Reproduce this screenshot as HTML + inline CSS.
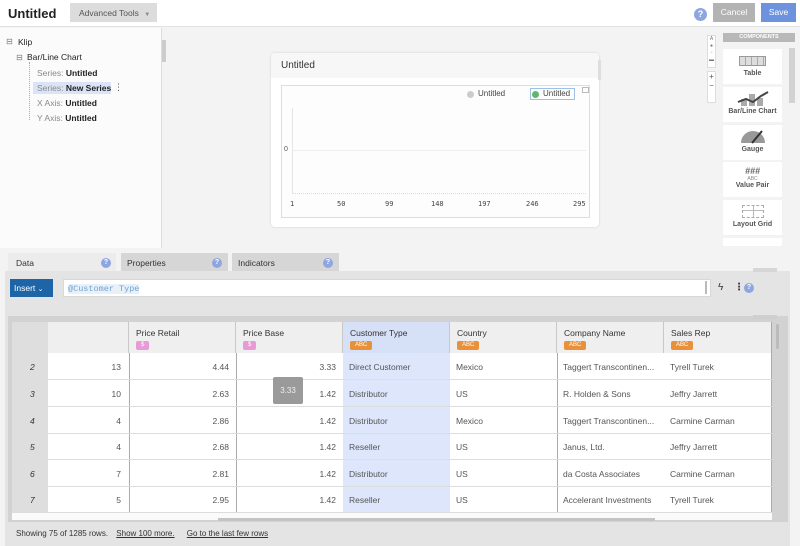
<!DOCTYPE html>
<html><head><meta charset="utf-8"><style>
*{box-sizing:border-box;margin:0;padding:0}
body{width:800px;height:546px;overflow:hidden;background:#f3f3f3;font-family:"Liberation Sans","DejaVu Sans",sans-serif;font-size:9px;color:#333;position:relative}
.a{position:absolute;white-space:nowrap}
.q{position:absolute;width:10px;height:10px;border-radius:50%;background:#8ea6e0;color:#fff;font-size:7px;font-weight:bold;text-align:center;line-height:10px}
.comp{position:absolute;left:723px;width:59px;height:35px;background:#fff;text-align:center;font-size:7px;font-weight:bold;color:#555;white-space:nowrap}
.th{position:absolute;top:322px;height:31px;border-right:1px solid #c8c8c8;background:#efefef;padding:6px 7px;font-size:8.5px;color:#333;white-space:nowrap}
.tag{display:inline-block;margin-top:2px;padding:0 5px;height:9px;border-radius:2px;font-size:6px;line-height:9px;color:#fff}
.row{position:absolute;left:12px;width:760px;height:27px;border-bottom:1px solid #ddd;font-size:8.5px;color:#555}
.row span{position:absolute;top:9px;white-space:nowrap}
</style></head><body>
<div class="a" style="left:0;top:0;width:800px;height:27px;background:#fff;border-bottom:1px solid #e2e2e2"></div>
<div class="a" style="left:8px;top:6px;font-size:13px;font-weight:bold;color:#222">Untitled</div>
<div class="a" style="left:70px;top:3px;width:87px;height:19px;background:#dcdcdc;color:#555;font-size:8.5px;padding:5px 9px">Advanced Tools <span style="color:#888;font-size:6px;margin-left:3px">▼</span></div>
<div class="q" style="left:694px;top:8px;width:13px;height:13px;line-height:13px;font-size:9px">?</div>
<div class="a" style="left:713px;top:3px;width:42px;height:19px;background:#b3b3b3;color:#fff;font-size:8.5px;text-align:center;line-height:19px">Cancel</div>
<div class="a" style="left:761px;top:3px;width:35px;height:19px;background:#6e93de;color:#fff;font-size:8.5px;text-align:center;line-height:19px">Save</div>
<div class="a" style="left:0;top:28px;width:162px;height:220px;background:#fbfbfb;border-right:1px solid #ddd"></div>
<div class="a" style="left:162px;top:40px;width:4px;height:22px;background:#ccc"></div>
<div class="a" style="left:6px;top:37px;font-size:8px;color:#777">⊟</div>
<div class="a" style="left:18px;top:37px;font-size:8.5px;color:#222">Klip</div>
<div class="a" style="left:16px;top:53px;font-size:8px;color:#777">⊟</div>
<div class="a" style="left:27px;top:52px;font-size:8.5px;color:#222">Bar/Line Chart</div>
<div class="a" style="left:29px;top:62px;width:1px;height:58px;border-left:1px dotted #aaa"></div>
<div class="a" style="left:33px;top:82px;width:78px;height:12px;background:#dbe4f7"></div>
<div class="a" style="left:37px;top:68px;font-size:8.5px;color:#888">Series: <b style="color:#222">Untitled</b></div>
<div class="a" style="left:37px;top:83px;font-size:8.5px;color:#888">Series: <b style="color:#222">New Series</b></div>
<div class="a" style="left:114px;top:82px;font-size:9px;color:#555">⋮</div>
<div class="a" style="left:37px;top:98px;font-size:8.5px;color:#888">X Axis: <b style="color:#222">Untitled</b></div>
<div class="a" style="left:37px;top:113px;font-size:8.5px;color:#888">Y Axis: <b style="color:#222">Untitled</b></div>
<div class="a" style="left:271px;top:53px;width:328px;height:174px;background:#fff;border-radius:4px;box-shadow:0 0 2px #ccc"></div>
<div class="a" style="left:271px;top:53px;width:328px;height:25px;background:#f7f7f7;border-radius:4px 4px 0 0"></div>
<div class="a" style="left:281px;top:60px;font-size:10px;color:#333">Untitled</div>
<div class="a" style="left:598px;top:60px;width:3px;height:20px;background:#ddd"></div>
<div class="a" style="left:281px;top:85px;width:309px;height:133px;border:1px solid #ddd;background:#fdfdfd"></div>
<div class="a" style="left:467px;top:91px;width:7px;height:7px;border-radius:50%;background:#ccc"></div>
<div class="a" style="left:478px;top:89px;font-size:8px;color:#444">Untitled</div>
<div class="a" style="left:530px;top:88px;width:45px;height:12px;border:1px solid #9ec0e6"></div>
<div class="a" style="left:532px;top:91px;width:7px;height:7px;border-radius:50%;background:#5cb86b"></div>
<div class="a" style="left:543px;top:89px;font-size:8px;color:#444">Untitled</div>
<div class="a" style="left:582px;top:87px;width:7px;height:6px;border:1px solid #bbb"></div>
<div class="a" style="left:292px;top:108px;width:1px;height:86px;background:#e6e6e6"></div>
<div class="a" style="left:293px;top:150px;width:293px;height:1px;background:#eee"></div>
<div class="a" style="left:293px;top:193px;width:293px;height:2px;border-top:1px dotted #ddd"></div>
<div class="a" style="left:284px;top:146px;font-size:7px;color:#555">0</div>
<div class="a" style="left:290px;top:200px;width:300px;font-size:7px;color:#444;font-family:'DejaVu Sans Mono',monospace">
<span class="a" style="left:0">1</span><span class="a" style="left:47px">50</span><span class="a" style="left:95px">99</span><span class="a" style="left:141px">148</span><span class="a" style="left:188px">197</span><span class="a" style="left:236px">246</span><span class="a" style="left:283px">295</span></div>
<div class="a" style="left:707px;top:35px;width:9px;height:33px;background:#fff;border:1px solid #ddd;font-size:5px;color:#777;text-align:center;line-height:7px;white-space:normal">A<br>●<br>▫<br>▬</div>
<div class="a" style="left:707px;top:71px;width:9px;height:32px;background:#fff;border:1px solid #ddd;font-size:8px;color:#555;text-align:center;line-height:9px;white-space:normal">+<br>−</div>
<div class="a" style="left:723px;top:33px;width:72px;height:9px;background:#b8b8b8;color:#fff;font-size:5.5px;font-weight:bold;text-align:center;line-height:9px">COMPONENTS</div>
<div class="a" style="left:789px;top:48px;width:6px;height:55px;background:#d2d2d2"></div>
<div class="comp" style="top:49px"><div style="margin:7px auto 4px;width:27px;height:10px;border:1px solid #999;background:repeating-linear-gradient(90deg,#ddd 0 5px,#aaa 5px 6px)"></div>Table</div>
<div class="comp" style="top:87px"><svg width="32" height="16" viewBox="0 0 32 16" style="margin-top:3px"><rect x="12" y="4" width="6" height="12" fill="#aaa"/><rect x="20" y="8" width="6" height="8" fill="#aaa"/><rect x="4" y="9" width="6" height="7" fill="#aaa"/><path d="M1 12 L9 9 L16 12 L24 6 L31 2" stroke="#444" stroke-width="2" fill="none"/></svg><br>Bar/Line Chart</div>
<div class="comp" style="top:125px"><svg width="30" height="16" viewBox="0 0 30 16" style="margin-top:3px"><path d="M3 15 A12 12 0 0 1 27 15 Z" fill="#999"/><path d="M14 15 L24 3" stroke="#333" stroke-width="2"/></svg><br>Gauge</div>
<div class="comp" style="top:162px"><div style="margin-top:4px;font-size:9px;color:#666;font-style:italic">###</div><div style="font-size:5px;font-weight:normal;color:#888">ABC</div>Value Pair</div>
<div class="comp" style="top:200px"><div style="margin:5px auto 3px;width:22px;height:13px;border:1px dashed #aaa;background:linear-gradient(90deg,transparent 10px,#bbb 10px 11px,transparent 11px),linear-gradient(0deg,transparent 6px,#bbb 6px 7px,transparent 7px)"></div>Layout Grid</div>
<div class="comp" style="top:238px;height:8px"></div>
<div class="a" style="left:8px;top:253px;width:108px;height:19px;background:#ececec;padding:5px 8px;font-size:8.5px">Data</div>
<div class="q" style="left:101px;top:258px">?</div>
<div class="a" style="left:121px;top:253px;width:107px;height:18px;background:#d6d6d6;padding:5px 6px;font-size:8.5px">Properties</div>
<div class="q" style="left:212px;top:258px">?</div>
<div class="a" style="left:232px;top:253px;width:107px;height:18px;background:#d6d6d6;padding:5px 6px;font-size:8.5px">Indicators</div>
<div class="q" style="left:323px;top:258px">?</div>
<div class="a" style="left:5px;top:271px;width:785px;height:275px;background:#e4e4e4"></div>
<div class="a" style="left:753px;top:268px;width:24px;height:4px;background:#d6d6d6"></div>
<div class="a" style="left:10px;top:279px;width:43px;height:18px;background:#1e65a8;color:#fff;font-size:8.5px;padding:4px 4px">Insert <span style="font-size:7px">⌄</span></div>
<div class="a" style="left:63px;top:279px;width:648px;height:18px;background:#fff;border:1px solid #d8d8d8"></div>
<div class="a" style="left:68px;top:284px;font-family:'Liberation Mono',monospace;font-size:8.5px;color:#6fa3d0;background:#e8f0f8">@Customer Type</div>
<div class="a" style="left:705px;top:281px;width:2px;height:13px;background:#bbb"></div>
<div class="a" style="left:718px;top:282px;font-size:10px;color:#333">ϟ</div>
<div class="a" style="left:734px;top:282px;font-size:10px;color:#333;font-weight:bold">⋮</div>
<div class="q" style="left:744px;top:283px">?</div>
<div class="a" style="left:8px;top:316px;width:780px;height:206px;background:#d2d2d2"></div>
<div class="a" style="left:753px;top:315px;width:24px;height:4px;background:#cfcfcf"></div>
<div class="a" style="left:12px;top:322px;width:760px;height:198px;background:#fff"></div>
<div class="a" style="left:12px;top:322px;width:36px;height:198px;background:#dedede"></div>
<div class="a" style="left:343px;top:322px;width:107px;height:198px;background:#dde6fb"></div>
<div class="th" style="left:48px;width:81px"></div>
<div class="th" style="left:129px;width:107px">Price Retail<br><span class="tag" style="background:#e79ad6">$</span></div>
<div class="th" style="left:236px;width:107px">Price Base<br><span class="tag" style="background:#e79ad6">$</span></div>
<div class="th" style="left:343px;width:107px;background:#d6e0f7">Customer Type<br><span class="tag" style="background:#e8913a">ABC</span></div>
<div class="th" style="left:450px;width:107px">Country<br><span class="tag" style="background:#e8913a">ABC</span></div>
<div class="th" style="left:557px;width:107px">Company Name<br><span class="tag" style="background:#e8913a">ABC</span></div>
<div class="th" style="left:664px;width:108px">Sales Rep<br><span class="tag" style="background:#e8913a">ABC</span></div>
<div class="a" style="left:129px;top:353px;width:1px;height:160px;background:#aaa"></div>
<div class="a" style="left:236px;top:353px;width:1px;height:160px;background:#aaa"></div>
<div class="a" style="left:557px;top:353px;width:1px;height:160px;background:#aaa"></div>
<div class="a" style="left:771px;top:322px;width:1px;height:198px;background:#aaa"></div>
<div class="a" style="left:776px;top:324px;width:3px;height:25px;background:#bbb;border-radius:2px"></div>
<div class="row" style="top:353px"><span style="left:18px;font-style:italic;color:#333">2</span><span style="right:651px">13</span><span style="right:543px">4.44</span><span style="right:436px">3.33</span><span style="left:337px">Direct Customer</span><span style="left:444px">Mexico</span><span style="left:551px">Taggert Transcontinen...</span><span style="left:658px">Tyrell Turek</span></div>
<div class="row" style="top:380px"><span style="left:18px;font-style:italic;color:#333">3</span><span style="right:651px">10</span><span style="right:543px">2.63</span><span style="right:436px">1.42</span><span style="left:337px">Distributor</span><span style="left:444px">US</span><span style="left:551px">R. Holden &amp; Sons</span><span style="left:658px">Jeffry Jarrett</span></div>
<div class="row" style="top:407px"><span style="left:18px;font-style:italic;color:#333">4</span><span style="right:651px">4</span><span style="right:543px">2.86</span><span style="right:436px">1.42</span><span style="left:337px">Distributor</span><span style="left:444px">Mexico</span><span style="left:551px">Taggert Transcontinen...</span><span style="left:658px">Carmine Carman</span></div>
<div class="row" style="top:433px"><span style="left:18px;font-style:italic;color:#333">5</span><span style="right:651px">4</span><span style="right:543px">2.68</span><span style="right:436px">1.42</span><span style="left:337px">Reseller</span><span style="left:444px">US</span><span style="left:551px">Janus, Ltd.</span><span style="left:658px">Jeffry Jarrett</span></div>
<div class="row" style="top:460px"><span style="left:18px;font-style:italic;color:#333">6</span><span style="right:651px">7</span><span style="right:543px">2.81</span><span style="right:436px">1.42</span><span style="left:337px">Distributor</span><span style="left:444px">US</span><span style="left:551px">da Costa Associates</span><span style="left:658px">Carmine Carman</span></div>
<div class="row" style="top:486px"><span style="left:18px;font-style:italic;color:#333">7</span><span style="right:651px">5</span><span style="right:543px">2.95</span><span style="right:436px">1.42</span><span style="left:337px">Reseller</span><span style="left:444px">US</span><span style="left:551px">Accelerant Investments</span><span style="left:658px">Tyrell Turek</span></div>
<div class="a" style="left:273px;top:377px;width:30px;height:27px;background:#9a9a9a;color:#eee;font-size:8px;text-align:center;line-height:27px;border-radius:2px">3.33</div>
<div class="a" style="left:12px;top:513px;width:760px;height:7px;background:#fafafa"></div>
<div class="a" style="left:218px;top:518px;width:437px;height:3px;background:#c4c4c4"></div>
<div class="a" style="left:16px;top:529px;font-size:8px;color:#333">Showing 75 of 1285 rows. <u style="margin-left:6px">Show 100 more.</u> <u style="margin-left:10px">Go to the last few rows</u></div>
</body></html>
